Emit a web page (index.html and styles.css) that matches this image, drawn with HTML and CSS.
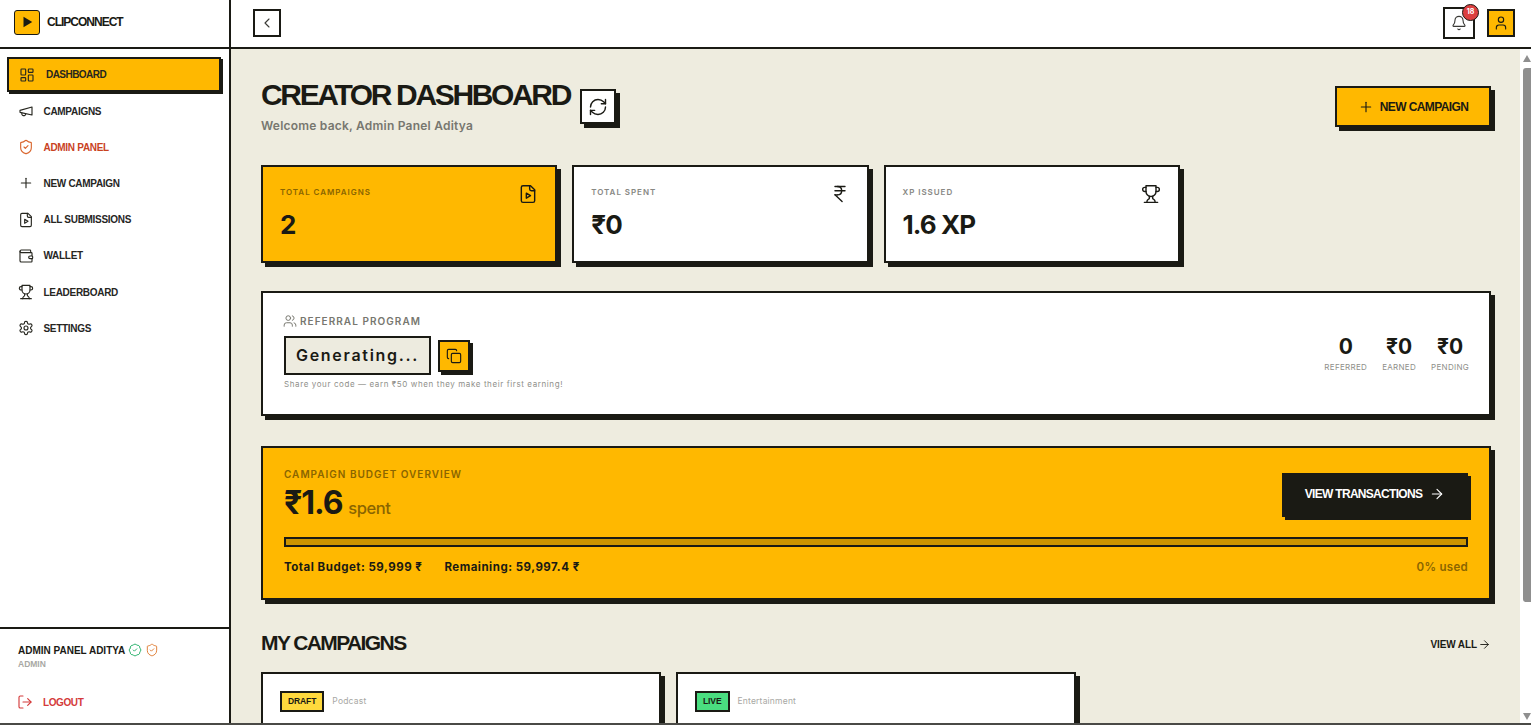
FILE: index.html
```html
<!DOCTYPE html>
<html lang="en">
<head>
<meta charset="utf-8">
<title>ClipConnect</title>
<link rel="stylesheet" href="styles.css">
</head>
<body>
<svg class="defs" width="0" height="0" aria-hidden="true">
  <symbol id="i-dash" viewBox="0 0 24 24"><rect x="3" y="3" width="7" height="9" rx="1"/><rect x="14" y="3" width="7" height="5" rx="1"/><rect x="14" y="12" width="7" height="9" rx="1"/><rect x="3" y="16" width="7" height="5" rx="1"/></symbol>
  <symbol id="i-mega" viewBox="0 0 24 24"><path d="m3 11 18-5v12L3 14v-3z"/><path d="M11.6 16.8a3 3 0 1 1-5.8-1.6"/></symbol>
  <symbol id="i-shield" viewBox="0 0 24 24"><path d="M20 13c0 5-3.5 7.5-7.66 8.95a1 1 0 0 1-.67-.01C7.5 20.5 4 18 4 13V6a1 1 0 0 1 1-1c2 0 4.5-1.2 6.24-2.72a1.17 1.17 0 0 1 1.52 0C14.51 3.81 17 5 19 5a1 1 0 0 1 1 1z"/><path d="m9 12 2 2 4-4"/></symbol>
  <symbol id="i-plus" viewBox="0 0 24 24"><path d="M5 12h14"/><path d="M12 5v14"/></symbol>
  <symbol id="i-file" viewBox="0 0 24 24"><path d="M15 2H6a2 2 0 0 0-2 2v16a2 2 0 0 0 2 2h12a2 2 0 0 0 2-2V7Z"/><path d="M14 2v4a2 2 0 0 0 2 2h4"/><path d="m10 11 5 3-5 3v-6Z"/></symbol>
  <symbol id="i-wallet" viewBox="0 0 24 24"><path d="M19 7V4a1 1 0 0 0-1-1H5a2 2 0 0 0 0 4h15a1 1 0 0 1 1 1v4h-3a2 2 0 0 0 0 4h3a1 1 0 0 0 1-1v-2a1 1 0 0 0-1-1"/><path d="M3 5v14a2 2 0 0 0 2 2h15a1 1 0 0 0 1-1v-4"/></symbol>
  <symbol id="i-trophy" viewBox="0 0 24 24"><path d="M6 9H4.5a2.5 2.5 0 0 1 0-5H6"/><path d="M18 9h1.5a2.5 2.5 0 0 0 0-5H18"/><path d="M4 22h16"/><path d="M10 14.66V17c0 .55-.47.98-.97 1.21C7.85 18.75 7 20.24 7 22"/><path d="M14 14.66V17c0 .55.47.98.97 1.21C16.15 18.75 17 20.24 17 22"/><path d="M18 2H6v7a6 6 0 0 0 12 0V2Z"/></symbol>
  <symbol id="i-gear" viewBox="0 0 24 24"><path d="M12.22 2h-.44a2 2 0 0 0-2 2v.18a2 2 0 0 1-1 1.73l-.43.25a2 2 0 0 1-2 0l-.15-.08a2 2 0 0 0-2.73.73l-.22.38a2 2 0 0 0 .73 2.73l.15.1a2 2 0 0 1 1 1.72v.51a2 2 0 0 1-1 1.74l-.15.09a2 2 0 0 0-.73 2.73l.22.38a2 2 0 0 0 2.73.73l.15-.08a2 2 0 0 1 2 0l.43.25a2 2 0 0 1 1 1.73V20a2 2 0 0 0 2 2h.44a2 2 0 0 0 2-2v-.18a2 2 0 0 1 1-1.73l.43-.25a2 2 0 0 1 2 0l.15.08a2 2 0 0 0 2.73-.73l.22-.39a2 2 0 0 0-.73-2.73l-.15-.08a2 2 0 0 1-1-1.74v-.5a2 2 0 0 1 1-1.74l.15-.09a2 2 0 0 0 .73-2.73l-.22-.38a2 2 0 0 0-2.73-.73l-.15.08a2 2 0 0 1-2 0l-.43-.25a2 2 0 0 1-1-1.73V4a2 2 0 0 0-2-2z"/><circle cx="12" cy="12" r="3"/></symbol>
  <symbol id="i-logout" viewBox="0 0 24 24"><path d="M9 21H5a2 2 0 0 1-2-2V5a2 2 0 0 1 2-2h4"/><path d="m16 17 5-5-5-5"/><path d="M21 12H9"/></symbol>
  <symbol id="i-refresh" viewBox="0 0 24 24"><path d="M3 12a9 9 0 0 1 9-9 9.75 9.75 0 0 1 6.74 2.74L21 8"/><path d="M21 3v5h-5"/><path d="M21 12a9 9 0 0 1-9 9 9.75 9.75 0 0 1-6.74-2.74L3 16"/><path d="M8 16H3v5"/></symbol>
  <symbol id="i-rupee" viewBox="0 0 24 24"><path d="M6 3h12"/><path d="M6 8h12"/><path d="m6 13 8.5 8"/><path d="M6 13h3"/><path d="M9 13c6.667 0 6.667-10 0-10"/></symbol>
  <symbol id="i-users" viewBox="0 0 24 24"><path d="M16 21v-2a4 4 0 0 0-4-4H6a4 4 0 0 0-4 4v2"/><circle cx="9" cy="7" r="4"/><path d="M22 21v-2a4 4 0 0 0-3-3.87"/><path d="M16 3.13a4 4 0 0 1 0 7.75"/></symbol>
  <symbol id="i-copy" viewBox="0 0 24 24"><rect x="8" y="8" width="14" height="14" rx="2"/><path d="M4 16c-1.1 0-2-.9-2-2V4c0-1.1.9-2 2-2h10c1.1 0 2 .9 2 2"/></symbol>
  <symbol id="i-arrow" viewBox="0 0 24 24"><path d="M5 12h14"/><path d="m12 5 7 7-7 7"/></symbol>
  <symbol id="i-bell" viewBox="0 0 24 24"><path d="M10.268 21a2 2 0 0 0 3.464 0"/><path d="M3.262 15.326A1 1 0 0 0 4 17h16a1 1 0 0 0 .74-1.673C19.41 13.956 18 12.499 18 8A6 6 0 0 0 6 8c0 4.499-1.411 5.956-2.738 7.326"/></symbol>
  <symbol id="i-user" viewBox="0 0 24 24"><path d="M19 21v-2a4 4 0 0 0-4-4H9a4 4 0 0 0-4 4v2"/><circle cx="12" cy="7" r="4"/></symbol>
  <symbol id="i-chev" viewBox="0 0 24 24"><path d="m15 18-6-6 6-6"/></symbol>
  <symbol id="i-badge" viewBox="0 0 24 24"><path d="M3.85 8.62a4 4 0 0 1 4.78-4.77 4 4 0 0 1 6.74 0 4 4 0 0 1 4.78 4.78 4 4 0 0 1 0 6.74 4 4 0 0 1-4.77 4.78 4 4 0 0 1-6.75 0 4 4 0 0 1-4.78-4.77 4 4 0 0 1 0-6.76Z"/><path d="m9 12 2 2 4-4"/></symbol>
</svg>

<div class="app">
  <aside class="sidebar">
    <div class="brand">
      <span class="brand-mark"><svg class="play" viewBox="0 0 24 24"><path d="M6 3 L21 12 L6 21 Z"/></svg></span>
      <span class="brand-name">CLIPCONNECT</span>
    </div>
    <nav class="nav">
      <a class="nav-item active"><svg class="ico nav-ico"><use href="#i-dash"/></svg>DASHBOARD</a>
      <a class="nav-item"><svg class="ico nav-ico"><use href="#i-mega"/></svg>CAMPAIGNS</a>
      <a class="nav-item admin"><svg class="ico nav-ico"><use href="#i-shield"/></svg>ADMIN PANEL</a>
      <a class="nav-item"><svg class="ico nav-ico"><use href="#i-plus"/></svg>NEW CAMPAIGN</a>
      <a class="nav-item"><svg class="ico nav-ico"><use href="#i-file"/></svg>ALL SUBMISSIONS</a>
      <a class="nav-item"><svg class="ico nav-ico"><use href="#i-wallet"/></svg>WALLET</a>
      <a class="nav-item"><svg class="ico nav-ico"><use href="#i-trophy"/></svg>LEADERBOARD</a>
      <a class="nav-item"><svg class="ico nav-ico"><use href="#i-gear"/></svg>SETTINGS</a>
    </nav>
    <div class="side-foot">
      <div class="user-name">ADMIN PANEL ADITYA
        <svg class="ico mini green"><use href="#i-badge"/></svg>
        <svg class="ico mini orange"><use href="#i-shield"/></svg>
      </div>
      <div class="user-role">ADMIN</div>
      <a class="logout"><svg class="ico nav-ico"><use href="#i-logout"/></svg>LOGOUT</a>
    </div>
  </aside>

  <div class="main">
    <header class="topbar">
      <button class="sq back"><svg class="ico i16"><use href="#i-chev"/></svg></button>
      <div class="top-right">
        <button class="sq bell"><svg class="ico i16"><use href="#i-bell"/></svg><span class="badge-count">18</span></button>
        <button class="sq profile"><svg class="ico i16"><use href="#i-user"/></svg></button>
      </div>
    </header>

    <div class="pane">
      <main class="content">
        <section class="page-head">
          <div class="title-wrap">
            <div>
              <h1 class="title">CREATOR DASHBOARD</h1>
              <p class="welcome">Welcome back, Admin Panel Aditya</p>
            </div>
            <button class="refresh"><svg class="ico i20"><use href="#i-refresh"/></svg></button>
          </div>
          <button class="new-btn"><svg class="ico i16"><use href="#i-plus"/></svg>NEW CAMPAIGN</button>
        </section>

        <section class="stats">
          <div class="stat yellow">
            <div class="stat-top"><span class="stat-label">TOTAL CAMPAIGNS</span><svg class="ico i20"><use href="#i-file"/></svg></div>
            <div class="stat-value">2</div>
          </div>
          <div class="stat">
            <div class="stat-top"><span class="stat-label">TOTAL SPENT</span><svg class="ico i20"><use href="#i-rupee"/></svg></div>
            <div class="stat-value">₹0</div>
          </div>
          <div class="stat">
            <div class="stat-top"><span class="stat-label">XP ISSUED</span><svg class="ico i20"><use href="#i-trophy"/></svg></div>
            <div class="stat-value">1.6 XP</div>
          </div>
        </section>

        <section class="referral">
          <div>
            <div class="ref-label"><svg class="ico i14 users-ico"><use href="#i-users"/></svg>REFERRAL PROGRAM</div>
            <div class="ref-row">
              <div class="ref-code">Generating...</div>
              <button class="copy"><svg class="ico i16"><use href="#i-copy"/></svg></button>
            </div>
            <p class="ref-note">Share your code — earn ₹50 when they make their first earning!</p>
          </div>
          <div class="ref-stats">
            <div class="ref-stat"><div class="ref-num">0</div><div class="ref-cap">REFERRED</div></div>
            <div class="ref-stat"><div class="ref-num">₹0</div><div class="ref-cap">EARNED</div></div>
            <div class="ref-stat"><div class="ref-num">₹0</div><div class="ref-cap">PENDING</div></div>
          </div>
        </section>

        <section class="budget">
          <div class="budget-top">
            <div>
              <div class="budget-label">CAMPAIGN BUDGET OVERVIEW</div>
              <div class="budget-amt">₹1.6 <span class="spent">spent</span></div>
            </div>
            <button class="tx-btn">VIEW TRANSACTIONS<svg class="ico i16"><use href="#i-arrow"/></svg></button>
          </div>
          <div class="bar"></div>
          <div class="budget-foot">
            <div class="totals"><span>Total Budget: 59,999 ₹</span><span>Remaining: 59,997.4 ₹</span></div>
            <span class="used">0% used</span>
          </div>
        </section>

        <section class="camp-head">
          <h2 class="camp-title">MY CAMPAIGNS</h2>
          <a class="view-all">VIEW ALL<svg class="ico i13"><use href="#i-arrow"/></svg></a>
        </section>

        <section class="camps">
          <article class="camp"><span class="pill draft">DRAFT</span><span class="cat">Podcast</span></article>
          <article class="camp"><span class="pill live">LIVE</span><span class="cat">Entertainment</span></article>
        </section>
      </main>
      <div class="scrollbar" aria-hidden="true">
        <span class="sb-up"></span>
        <span class="sb-thumb"></span>
        <span class="sb-down"></span>
      </div>
    </div>
  </div>
</div>
</body>
</html>
```

FILE: styles.css
```css
* { box-sizing: border-box; }
html, body { margin: 0; height: 100%; overflow: hidden; }
body { font-family: "Inter", "Liberation Sans", sans-serif; color: #1a1a14; background: #fff; }
.defs { position: absolute; }
button { font: inherit; color: inherit; padding: 0; cursor: pointer; }
p, h1, h2 { margin: 0; }

.ico { fill: none; stroke: currentColor; stroke-width: 1.7; stroke-linecap: round; stroke-linejoin: round; flex: none; display: block; }
.i13 { width: 13px; height: 13px; }
.i14 { width: 14px; height: 14px; }
.i16 { width: 16px; height: 16px; }
.i18 { width: 18px; height: 18px; }
.i20 { width: 20px; height: 20px; }

.app { display: flex; height: 725px; border-bottom: 2px solid #4a4a46; }

/* Sidebar */
.sidebar { width: 231px; flex: none; display: flex; flex-direction: column; border-right: 2px solid #1a1a14; background: #fff; }
.brand { height: 49px; flex: none; display: flex; align-items: center; gap: 7px; padding: 0 0 3px 14px; border-bottom: 2px solid #1a1a14; }
.brand-mark { width: 26px; height: 25px; background: #ffb800; border: 1.5px solid #1a1a14; border-radius: 3px; display: flex; align-items: center; justify-content: center; }
.play { width: 14px; height: 14px; fill: #1a1a14; display: block; }
.brand-name { font: 700 12px "Liberation Sans", sans-serif; letter-spacing: -1px; }
.nav { flex: 1; display: flex; flex-direction: column; gap: 2px; padding: 8px 8px 0 7px; }
.nav-item, .logout { display: flex; align-items: center; gap: 10px; height: 34.2px; padding-left: 10.5px; font: 700 10px "Liberation Sans", sans-serif; letter-spacing: -0.3px; color: #26261f; }
.nav-ico { width: 16px; height: 16px; }
.nav-item.active { height: 35px; width: 214px; gap: 11px; padding-left: 10px; border: 2px solid #1a1a14; background: #ffb800; box-shadow: 2px 2px 0 #1a1a14; letter-spacing: -0.55px; }
.nav-item.admin { color: #c9431f; }
.nav-item.admin .nav-ico { color: #d9662e; }
.side-foot { height: 96px; flex: none; border-top: 2px solid #1a1a14; padding: 14px 0 0 18px; }
.user-name { display: flex; align-items: center; gap: 3px; font: 700 10px "Liberation Sans", sans-serif; letter-spacing: 0; height: 14px; }
.mini { width: 14px; height: 14px; stroke-width: 1.7; }
.green { color: #2fb36f; }
.orange { color: #e0813a; }
.user-role { font: 700 8.5px "Liberation Sans", sans-serif; color: #a8a8a4; margin-top: 2px; }
.logout { color: #d43a3a; padding-left: 0; margin-left: -1px; margin-top: 24px; height: 18px; letter-spacing: -0.4px; }

/* Main */
.main { flex: 1; min-width: 0; display: flex; flex-direction: column; background: #eeecdf; }
.topbar { height: 49px; flex: none; background: #fff; border-bottom: 2px solid #1a1a14; display: flex; align-items: center; justify-content: space-between; padding: 0 16px 2px 22px; }
.top-right { display: flex; align-items: center; gap: 12px; }
.sq { width: 28px; height: 28px; background: #fff; border: 2px solid #1a1a14; display: flex; align-items: center; justify-content: center; position: relative; }
.back { color: #3a3a36; }
.bell { width: 32px; height: 32px; color: #3a3a36; }
.profile { background: #ffb800; }
.badge-count { position: absolute; top: -5px; right: -6px; width: 17px; height: 17px; border-radius: 50%; background: #dc4040; border: 1.5px solid #1a1a14; color: #fff; font: 700 7px/14px "Inter", sans-serif; text-align: center; }

.pane { flex: 1; min-height: 0; display: flex; }
.content { flex: 1; min-width: 0; overflow: hidden; padding: 29px 29px 30px 30px; }
.scrollbar { width: 11px; flex: none; background: #fff; display: flex; flex-direction: column; padding: 6px 0 3px 3px; }
.sb-up, .sb-down { width: 0; height: 0; border-left: 4px solid transparent; border-right: 4px solid transparent; }
.sb-up { border-bottom: 7px solid #8f8f8f; }
.sb-down { border-top: 7px solid #8f8f8f; margin-top: auto; }
.sb-thumb { width: 8px; height: 534px; margin-top: 6px; background: #8f8f8f; border-radius: 3px 0 0 3px; }

.page-head { height: 57px; display: flex; align-items: center; justify-content: space-between; }
.title-wrap { display: flex; align-items: center; gap: 10px; }
.title { font: 700 30px/33px "Liberation Sans", sans-serif; letter-spacing: -2.35px; white-space: nowrap; margin-top: -1px; }
.welcome { font-size: 12px; line-height: 16px; font-weight: 600; color: #77776f; margin-top: 7px; letter-spacing: 0.22px; }
.refresh { width: 36px; height: 35px; background: #fff; border: 2px solid #1a1a14; box-shadow: 4px 4px 0 #1a1a14; display: flex; align-items: center; justify-content: center; }
.new-btn { width: 156px; height: 41px; background: #ffb800; border: 2px solid #1a1a14; box-shadow: 4px 4px 0 #1a1a14; display: flex; align-items: center; justify-content: center; gap: 6px; font: 700 12px "Liberation Sans", sans-serif; letter-spacing: -0.6px; }

.stats { display: grid; grid-template-columns: repeat(4, 1fr); gap: 15px; margin-top: 30px; }
.stat { height: 98px; background: #fff; border: 2px solid #1a1a14; box-shadow: 4px 4px 0 #1a1a14; padding: 17px 17px 20px 17px; }
.stat.yellow { background: #ffb800; }
.stat-top { display: flex; justify-content: space-between; height: 20px; }
.stat-label { font-size: 8px; font-weight: 600; letter-spacing: 0.95px; color: #888884; line-height: 17px; }
.yellow .stat-label { color: #8a6500; }
.stat-value { font-size: 26px; line-height: 32px; font-weight: 700; margin-top: 5px; letter-spacing: -0.9px; }

.referral { height: 125px; margin-top: 28px; background: #fff; border: 2px solid #1a1a14; box-shadow: 4px 4px 0 #1a1a14; padding: 21px 20px 0 21px; display: flex; justify-content: space-between; }
.ref-label { display: flex; align-items: center; gap: 3px; height: 14px; font-size: 10px; font-weight: 600; letter-spacing: 1.05px; color: #77776f; }
.users-ico { margin-left: -1px; }
.ref-row { display: flex; align-items: center; gap: 7px; margin-top: 8px; }
.ref-code { width: 147px; height: 39px; background: #edebdf; border: 2px solid #1a1a14; font-size: 16px; font-weight: 600; letter-spacing: 1.7px; line-height: 35px; padding-left: 10px; white-space: nowrap; }
.copy { width: 32px; height: 32px; background: #ffb800; border: 2px solid #1a1a14; box-shadow: 3px 3px 0 #1a1a14; display: flex; align-items: center; justify-content: center; }
.ref-note { font-size: 8px; line-height: 12px; color: #8f8f8a; margin-top: 3px; letter-spacing: 0.6px; white-space: nowrap; }
.ref-stats { display: flex; gap: 15px; margin-top: 20px; }
.ref-stat { text-align: center; }
.ref-num { font-size: 21px; line-height: 26px; font-weight: 700; }
.ref-cap { font-size: 8px; line-height: 12px; color: #8f8f8a; margin-top: 1px; letter-spacing: 0.3px; }

.budget { height: 154px; margin-top: 30px; background: #ffb800; border: 2px solid #1a1a14; box-shadow: 4px 4px 0 #1a1a14; padding: 21px 21px 0; }
.budget-top { display: flex; align-items: flex-start; justify-content: space-between; height: 54px; }
.budget-label { font-size: 10px; line-height: 12px; font-weight: 600; letter-spacing: 1px; color: #8a6500; height: 12px; margin-top: -1px; }
.budget-amt { font-size: 32px; line-height: 40px; font-weight: 700; letter-spacing: -1px; margin-top: 3px; }
.spent { font-size: 16.5px; font-weight: 500; color: #8a6500; letter-spacing: -0.4px; margin-left: -1px; }
.tx-btn { width: 186px; height: 44px; margin-top: 4px; padding-bottom: 2px; background: #1a1a14; color: #fff; border: 0; box-shadow: 3px 3px 0 #1a1a14; display: flex; align-items: center; justify-content: center; gap: 7px; font: 700 12px "Liberation Sans", sans-serif; letter-spacing: -0.7px; }
.bar { height: 10px; margin-top: 14px; background: #cc9400; border: 2px solid #1a1a14; }
.budget-foot { display: flex; justify-content: space-between; margin-top: 13px; line-height: 14px; font-size: 11.5px; font-weight: 700; }
.totals { display: flex; gap: 22px; letter-spacing: 0.5px; }
.used { color: #8a6500; font-weight: 600; letter-spacing: 0.3px; }

.camp-head { display: flex; align-items: center; justify-content: space-between; height: 26px; margin-top: 30px; }
.camp-title { font: 700 21px "Liberation Sans", sans-serif; letter-spacing: -1.6px; }
.view-all { display: flex; align-items: center; gap: 1px; font: 700 10px "Liberation Sans", sans-serif; padding-top: 2px; letter-spacing: -0.1px; }
.camps { display: grid; grid-template-columns: repeat(3, 1fr); gap: 15px; margin-top: 16px; }
.camp { height: 155px; background: #fff; border: 2px solid #1a1a14; box-shadow: 4px 4px 0 #1a1a14; padding: 17px; display: flex; align-items: flex-start; gap: 8px; }
.pill { height: 21px; border: 2px solid #1a1a14; font: 700 8.5px/17px "Liberation Sans", sans-serif; padding: 0 6px; letter-spacing: -0.1px; }
.draft { background: #ffd93d; }
.live { background: #4ade80; }
.cat { font-size: 8.5px; line-height: 21px; color: #a8a8a4; letter-spacing: 0.2px; }
```
